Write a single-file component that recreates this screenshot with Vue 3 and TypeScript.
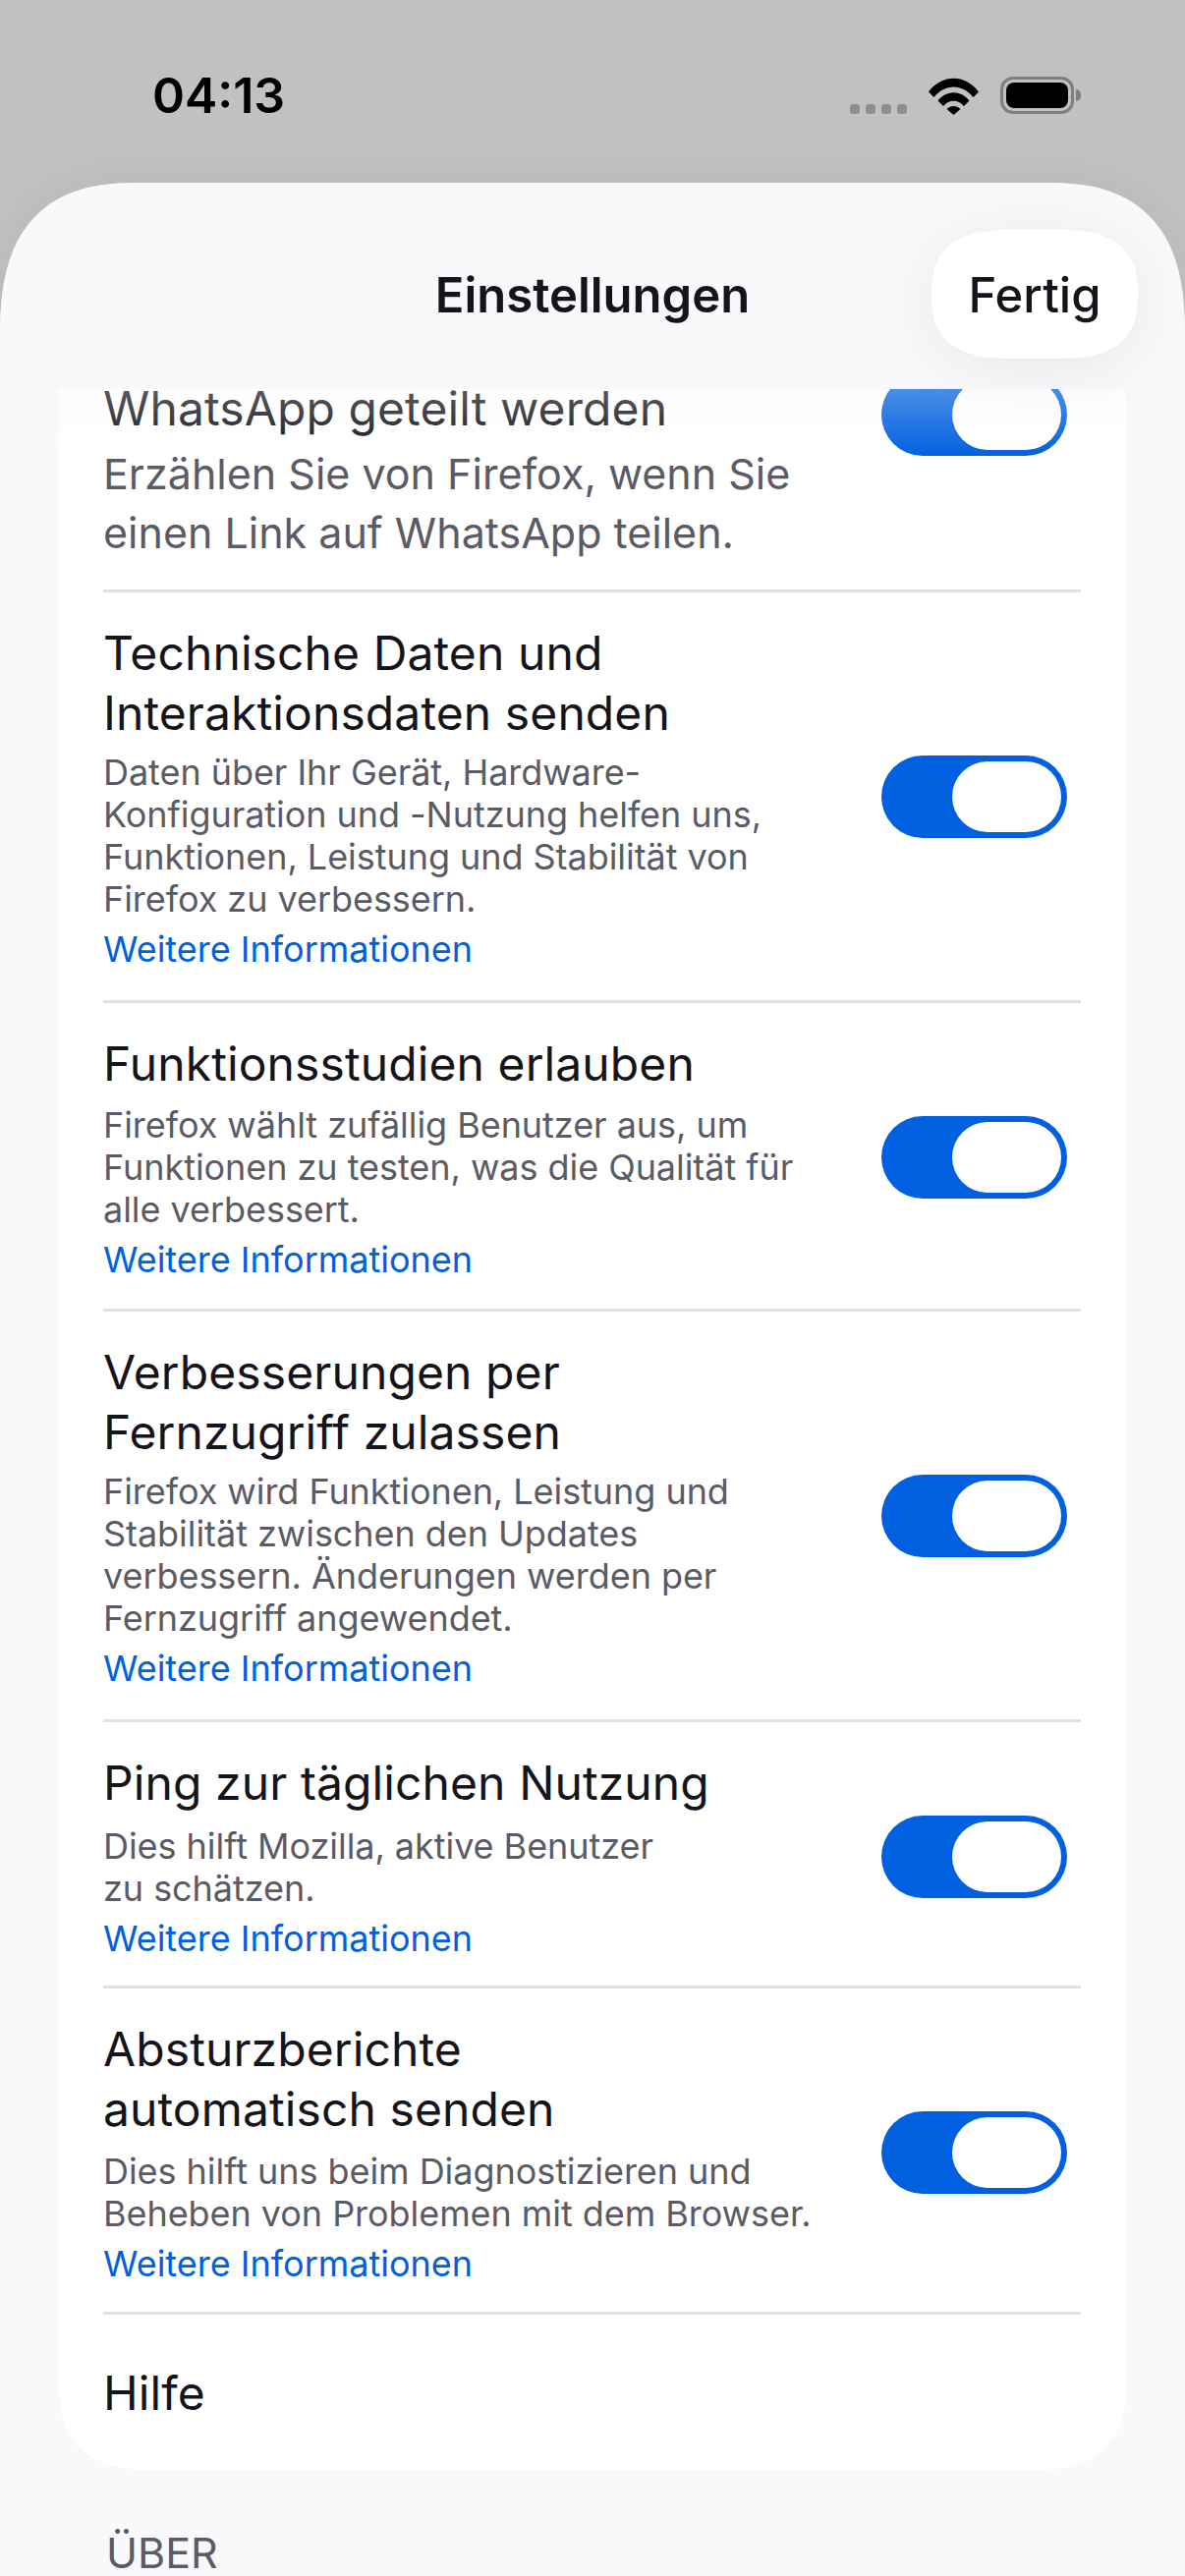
<script setup lang="ts">
interface Row {
  title: string[]
  desc: string[]
  shift: number
}

// shift: the short rows sit their description a little lower
const rows: Row[] = [
  {
    title: ['Technische Daten und', 'Interaktionsdaten senden'],
    desc: [
      'Daten über Ihr Gerät, Hardware-',
      'Konfiguration und -Nutzung helfen uns,',
      'Funktionen, Leistung und Stabilität von',
      'Firefox zu verbessern.'
    ],
    shift: 0
  },
  {
    title: ['Funktionsstudien erlauben'],
    desc: [
      'Firefox wählt zufällig Benutzer aus, um',
      'Funktionen zu testen, was die Qualität für',
      'alle verbessert.'
    ],
    shift: 2
  },
  {
    title: ['Verbesserungen per', 'Fernzugriff zulassen'],
    desc: [
      'Firefox wird Funktionen, Leistung und',
      'Stabilität zwischen den Updates',
      'verbessern. Änderungen werden per',
      'Fernzugriff angewendet.'
    ],
    shift: 0
  },
  {
    title: ['Ping zur täglichen Nutzung'],
    desc: ['Dies hilft Mozilla, aktive Benutzer', 'zu schätzen.'],
    shift: 4
  },
  {
    title: ['Absturzberichte', 'automatisch senden'],
    desc: ['Dies hilft uns beim Diagnostizieren und', 'Beheben von Problemen mit dem Browser.'],
    shift: 3
  }
]
</script>

<template>
  <div class="screen">
    <div class="status">
      <span class="time">04:13</span>
      <div class="status-icons">
        <div class="signal">
          <i v-for="n in 4" :key="n"></i>
        </div>
        <svg class="wifi" width="51" height="38" viewBox="0 0 51 38">
          <path d="M0 14.500 C13.500 -4 37.500 -4 51 14.500 L45.500 20 C34.500 6 16.500 6 5.500 20 Z" fill="#000" />
          <path d="M9.500 23.500 C18 12.500 33 12.500 41.500 23.500 L36 29 C30 22 21 22 15 29 Z" fill="#000" />
          <path d="M18.500 32 C22.500 28 28.500 28 32.500 32 L25.500 38 Z" fill="#000" />
        </svg>
        <div class="battery">
          <div class="battery-body"><div class="battery-fill"></div></div>
          <div class="battery-nub"></div>
        </div>
      </div>
    </div>

    <div class="sheet">
      <header class="nav">
        <h1 class="nav-title">Einstellungen</h1>
        <button class="done">Fertig</button>
      </header>

      <div class="scroller">
        <div class="card">
          <div class="row row-clipped">
            <div class="row-text">
              <div class="title">WhatsApp geteilt werden</div>
              <div class="desc-large">
                <span>Erzählen Sie von Firefox, wenn Sie</span>
                <span>einen Link auf WhatsApp teilen.</span>
              </div>
            </div>
            <div class="toggle"><div class="knob"></div></div>
          </div>

          <div
            v-for="row in rows"
            :key="row.title[0]"
            class="row"
            :style="{ '--shift': `${row.shift}px` }"
          >
            <div class="row-text">
              <div class="title">
                <span v-for="line in row.title" :key="line">{{ line }}</span>
              </div>
              <div class="desc">
                <span v-for="line in row.desc" :key="line">{{ line }}</span>
              </div>
              <a class="link">Weitere Informationen</a>
            </div>
            <div class="toggle"><div class="knob"></div></div>
          </div>

          <div class="row row-plain">
            <div class="title">Hilfe</div>
          </div>
        </div>

        <div class="section-label">ÜBER</div>
        <div class="scroll-fade"></div>
      </div>
    </div>
  </div>
</template>

<style>
html,
body {
  margin: 0;
  background: #c1c1c3;
}
</style>

<style scoped>
.screen {
  width: 1206px;
  height: 2622px;
  overflow: hidden;
  display: flex;
  flex-direction: column;
  background: #c1c1c3;
  font-family: Inter, "Liberation Sans", sans-serif;
  color: #15141a;
}

.status {
  height: 186px;
  flex: none;
  display: flex;
  justify-content: space-between;
  padding: 72px 106px 0 155px;
  box-sizing: border-box;
}

.time {
  font-size: 50px;
  line-height: 50px;
  font-weight: 600;
  height: 50px;
  color: #000;
}

.status-icons {
  display: flex;
  align-items: flex-start;
  padding-top: 6px;
}

.signal {
  display: flex;
  gap: 6px;
  margin-top: 28px;
  margin-right: 22px;
}

.signal i {
  width: 10px;
  height: 10px;
  border-radius: 3px;
  background: #8e8e90;
}

.wifi {
  margin-top: 1px;
  margin-right: 22px;
}

.battery {
  display: flex;
  align-items: center;
}

.battery-body {
  width: 75px;
  height: 38px;
  box-sizing: border-box;
  border: 3px solid #7f7f81;
  border-radius: 13px;
  padding: 3px;
}

.battery-fill {
  width: 100%;
  height: 100%;
  background: #000;
  border-radius: 8px;
}

.battery-nub {
  width: 5px;
  height: 12px;
  margin-left: 2px;
  background: #7f7f81;
  border-radius: 0 6px 6px 0;
}

.sheet {
  flex: 1;
  min-height: 0;
  display: flex;
  flex-direction: column;
  background: #f9f9fb;
  border-radius: 145px 145px 0 0 / 160px 160px 0 0;
  corner-shape: superellipse(1.4);
  box-shadow: 0 0 50px rgba(0, 0, 0, 0.05);
  overflow: hidden;
}

.nav {
  flex: none;
  height: 210px;
  display: flex;
  justify-content: center;
  position: relative;
  z-index: 2;
  background: #f9f9fb;
}

.nav-title {
  margin: 0;
  font-size: 49px;
  line-height: 60px;
  font-weight: 600;
  padding-top: 85px;
}

.done {
  position: absolute;
  top: 48px;
  right: 48px;
  width: 210px;
  height: 131px;
  border: none;
  border-radius: 82px / 65.5px;
  corner-shape: superellipse(1.4);
  background: #fff;
  box-shadow: 0 10px 70px rgba(0, 0, 0, 0.07);
  font: 500 49px Inter, sans-serif;
  color: #15141a;
  padding: 2px 0 0;
}

.scroller {
  flex: 1;
  min-height: 0;
  overflow: hidden;
  position: relative;
}

.scroll-fade {
  position: absolute;
  top: 0;
  left: 0;
  right: 0;
  height: 70px;
  background: linear-gradient(rgba(249, 249, 251, 0.3), rgba(249, 249, 251, 0));
  pointer-events: none;
}

.card {
  margin: -160px 60px 0;
  padding-left: 45px;
  background: #fff;
  border-radius: 0 0 100px 100px / 0 0 90px 90px;
  corner-shape: superellipse(1.4);
}

.row {
  --shift: 0px;
  display: flex;
  align-items: center;
  padding: 31px 14px calc(30px - var(--shift)) 0;
  margin-right: 46px;
  border-bottom: 3px solid #e0e0e6;
}

.row-clipped {
  padding-bottom: 24px;
}

.row-clipped .row-text {
  padding: 118px 0 4px;
}

.row-plain {
  border-bottom: none;
  height: 158px;
  padding: 0;
  box-sizing: border-box;
}

.row-text {
  flex: 1;
  min-width: 0;
}

.title span,
.desc span,
.desc-large span {
  display: block;
  white-space: nowrap;
}

.title {
  font-size: 48px;
  line-height: 61px;
  letter-spacing: 0.1px;
}

.desc {
  margin-top: calc(9px + var(--shift));
  font-size: 36px;
  line-height: 43px;
  letter-spacing: -0.05px;
  color: #5b5b66;
}

.desc-large {
  margin-top: 6px;
  font-size: 43px;
  line-height: 60px;
  color: #5b5b66;
}

.link {
  display: block;
  margin-top: 8px;
  font-size: 36px;
  line-height: 43px;
  color: #0060df;
}

.toggle {
  flex: none;
  width: 189px;
  height: 84px;
  box-sizing: border-box;
  padding: 6px;
  border-radius: 42px;
  background: #0060df;
  display: flex;
  justify-content: flex-end;
}

.knob {
  width: 111px;
  height: 72px;
  border-radius: 36px;
  background: #fff;
}

.section-label {
  margin: 60px 0 0 108px;
  font-size: 43px;
  line-height: 48px;
  color: #5b5b66;
}
</style>
